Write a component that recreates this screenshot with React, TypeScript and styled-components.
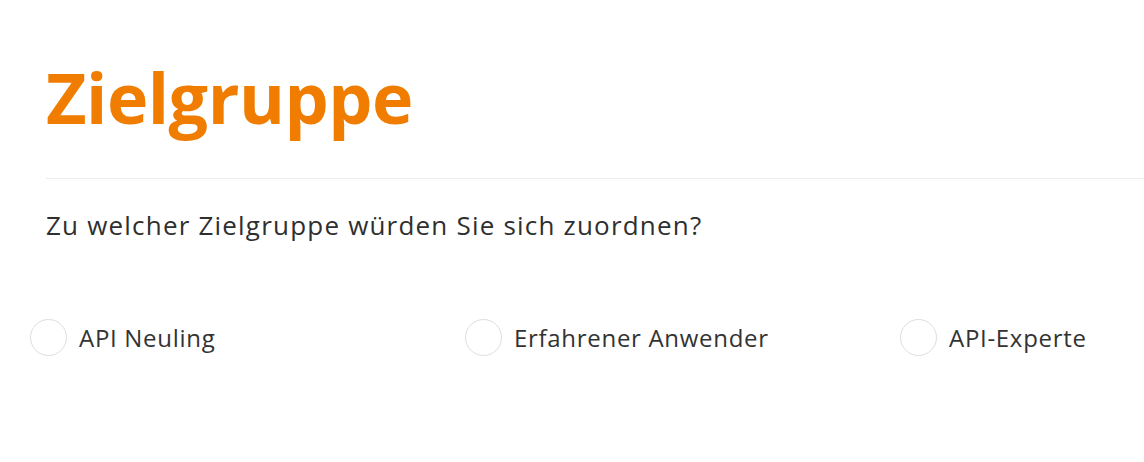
import React from "react";
import styled, { createGlobalStyle } from "styled-components";

const GlobalStyle = createGlobalStyle`
  html, body {
    margin: 0;
    padding: 0;
    background: #ffffff;
  }
  body {
    font-family: "Open Sans", sans-serif;
    color: #333333;
  }
`;

const Section = styled.section`
  padding: 55px 0 0 46px;
`;

const Title = styled.h1`
  margin: 0;
  font-family: "Open Sans", sans-serif;
  font-weight: 700;
  font-size: 70px;
  line-height: 84px;
  letter-spacing: -0.5px;
  color: #f07d00;
`;

const Divider = styled.hr`
  margin: 39px 0 0 0;
  border: none;
  border-top: 1px solid #ececec;
`;

const Question = styled.p`
  margin: 31px 0 0 0;
  font-size: 26px;
  line-height: 30px;
  letter-spacing: 1.2px;
  color: #2f2f2f;
`;

const Options = styled.div`
  display: grid;
  grid-template-columns: 435px 435px 1fr;
  margin: 79px 0 0 -16px;
`;

const Option = styled.label`
  display: flex;
  align-items: center;
  gap: 12px;
  cursor: pointer;
`;

const Circle = styled.span`
  width: 35px;
  height: 35px;
  border-radius: 50%;
  border: 1px solid #dedede;
  background: #fff;
  flex: none;
`;

const Label = styled.span`
  font-size: 24px;
  line-height: 30px;
  letter-spacing: 0.7px;
  color: #333333;
`;

const choices = ["API Neuling", "Erfahrener Anwender", "API-Experte"];

export default function App() {
  return (
    <>
      <GlobalStyle />
      <Section>
        <Title>Zielgruppe</Title>
        <Divider />
        <Question>Zu welcher Zielgruppe würden Sie sich zuordnen?</Question>
        <Options>
          {choices.map((c) => (
            <Option key={c}>
              <Circle />
              <Label>{c}</Label>
            </Option>
          ))}
        </Options>
      </Section>
    </>
  );
}
